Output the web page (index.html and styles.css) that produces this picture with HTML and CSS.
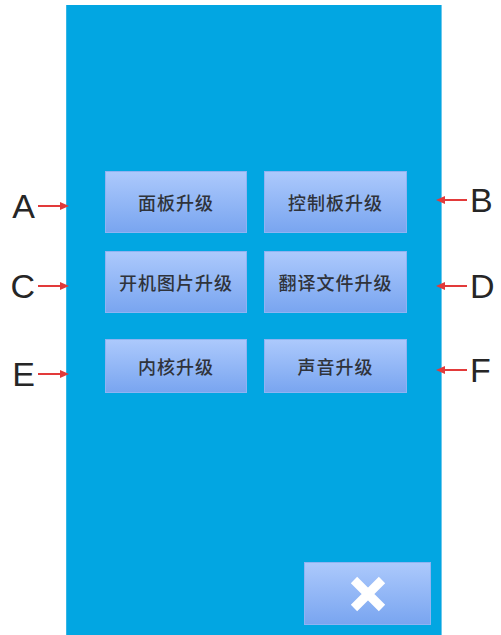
FILE: index.html
```html
<!DOCTYPE html>
<html lang="zh-CN">
<head>
<meta charset="utf-8">
<title>升级</title>
<link rel="stylesheet" href="styles.css">
</head>
<body>
<div class="page">
  <div class="side side-left">
    <div class="callout callout-a"><span class="letter">A</span><svg class="arrow" width="31" height="10" viewBox="0 0 31 10"><line x1="0" y1="5" x2="24" y2="5" stroke="#e23a3a" stroke-width="2"/><polygon points="22,1 31,5 22,9" fill="#e23a3a"/></svg></div>
    <div class="callout callout-c"><span class="letter">C</span><svg class="arrow" width="31" height="10" viewBox="0 0 31 10"><line x1="0" y1="5" x2="24" y2="5" stroke="#e23a3a" stroke-width="2"/><polygon points="22,1 31,5 22,9" fill="#e23a3a"/></svg></div>
    <div class="callout callout-e"><span class="letter">E</span><svg class="arrow" width="31" height="10" viewBox="0 0 31 10"><line x1="0" y1="5" x2="24" y2="5" stroke="#e23a3a" stroke-width="2"/><polygon points="22,1 31,5 22,9" fill="#e23a3a"/></svg></div>
  </div>
  <div class="panel">
    <div class="grid">
      <div class="btn">面板升级</div>
      <div class="btn">控制板升级</div>
      <div class="btn">开机图片升级</div>
      <div class="btn">翻译文件升级</div>
      <div class="btn row3">内核升级</div>
      <div class="btn row3">声音升级</div>
    </div>
    <div class="btn close"><svg width="36" height="36" viewBox="0 0 36 36"><path d="M4 4 L32 32 M32 4 L4 32" stroke="#ffffff" stroke-width="9" stroke-linecap="butt"/></svg></div>
  </div>
  <div class="side side-right">
    <div class="callout callout-b"><svg class="arrow" width="31" height="10" viewBox="0 0 31 10"><line x1="7" y1="5" x2="31" y2="5" stroke="#e23a3a" stroke-width="2"/><polygon points="9,1 0,5 9,9" fill="#e23a3a"/></svg><span class="letter">B</span></div>
    <div class="callout callout-d"><svg class="arrow" width="31" height="10" viewBox="0 0 31 10"><line x1="7" y1="5" x2="31" y2="5" stroke="#e23a3a" stroke-width="2"/><polygon points="9,1 0,5 9,9" fill="#e23a3a"/></svg><span class="letter">D</span></div>
    <div class="callout callout-f"><svg class="arrow" width="31" height="10" viewBox="0 0 31 10"><line x1="7" y1="5" x2="31" y2="5" stroke="#e23a3a" stroke-width="2"/><polygon points="9,1 0,5 9,9" fill="#e23a3a"/></svg><span class="letter">F</span></div>
  </div>
</div>
</body>
</html>
```

FILE: styles.css
```css
html, body {
  margin: 0;
  padding: 0;
  background: #ffffff;
}
.page {
  display: flex;
  width: 501px;
  height: 635px;
  overflow: hidden;
}
.side {
  position: relative;
  z-index: 1;
  display: flex;
  flex-direction: column;
  padding-top: 171px;
  box-sizing: border-box;
}
.side-left {
  width: 66px;
  align-items: flex-end;
}
.side-right {
  width: 59px;
  align-items: flex-start;
}
.callout {
  height: 62px;
  display: flex;
  align-items: center;
  gap: 3px;
  box-sizing: border-box;
}
.side-left .callout {
  margin-right: -3px;
  padding-top: 8px;
}
.side-right .callout {
  margin-left: -6px;
}
.callout-c, .callout-d {
  margin-top: 18px;
}
.callout-e, .callout-f {
  margin-top: 26px;
}
.callout-b {
  padding-bottom: 4px;
}
.callout-d {
  padding-top: 8px;
}
.letter {
  font-family: "Liberation Sans", Arial, sans-serif;
  font-size: 34px;
  line-height: 1;
  color: #262626;
}
.arrow {
  display: block;
  flex: none;
}
.panel {
  width: 376px;
  height: 630px;
  margin-top: 5px;
  background: #02a6e2;
  border-left: 1px solid #35b6e6;
  border-right: 1px solid #6cc8ec;
  box-sizing: border-box;
  display: flex;
  flex-direction: column;
  padding: 166px 0 10px 38px;
}
.grid {
  display: grid;
  grid-template-columns: 142px 143px;
  grid-auto-rows: 62px;
  column-gap: 17px;
  row-gap: 18px;
}
.btn {
  display: flex;
  align-items: center;
  justify-content: center;
  background: linear-gradient(#acc9fc, #79a5f0);
  border: 1px solid #8fb3f2;
  box-sizing: border-box;
  font-family: "Noto Sans CJK SC", "Noto Sans", sans-serif;
  font-size: 18px;
  font-weight: 500;
  letter-spacing: 1px;
  color: #2f333b;
}
.row3 {
  margin-top: 8px;
}
.close {
  margin-top: auto;
  align-self: flex-end;
  margin-right: 10px;
  width: 127px;
  height: 63px;
}
.close svg {
  display: block;
}
```
